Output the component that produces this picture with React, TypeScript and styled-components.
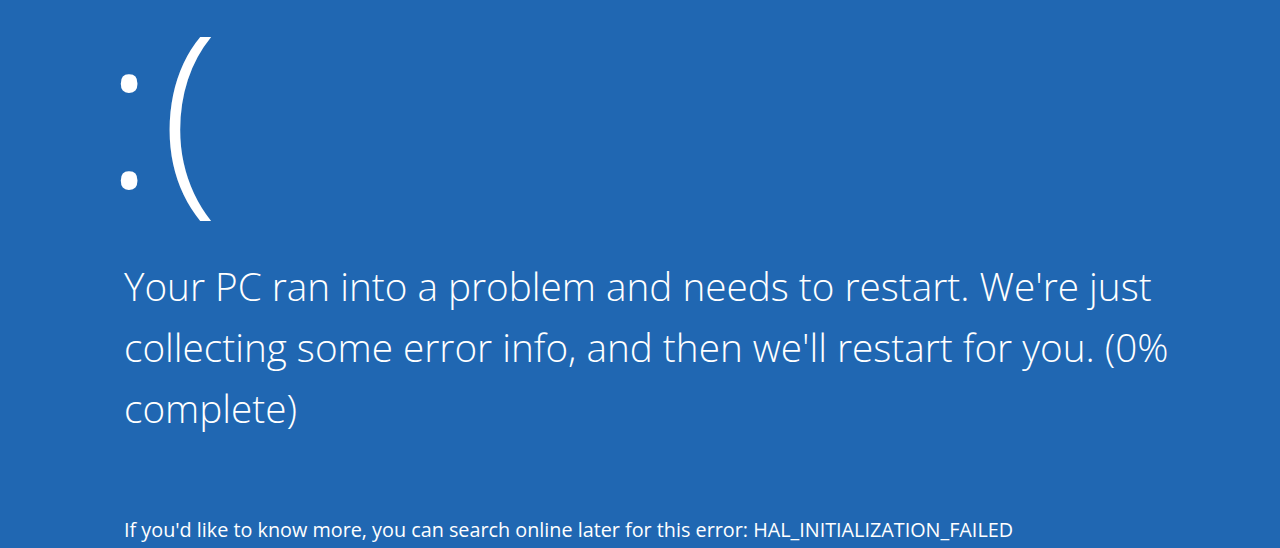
import styled, { createGlobalStyle } from "styled-components";

const GlobalStyle = createGlobalStyle`
  html, body {
    margin: 0;
    padding: 0;
    background: #2067b2;
    overflow: hidden;
  }
`;

const Screen = styled.div`
  width: 1280px;
  height: 548px;
  background: #2067b2;
  color: #ffffff;
  font-family: "Open Sans", "Liberation Sans", sans-serif;
  font-weight: 300;
  display: flex;
  flex-direction: column;
  padding-left: 124px;
  box-sizing: border-box;
  overflow: hidden;
`;

const Face = styled.div`
  font-size: 210px;
  font-weight: 350;
  line-height: 252px;
  height: 252px;
  margin: -19px 0 0 -20px;
  letter-spacing: 7px;
  white-space: nowrap;
`;

const Message = styled.p`
  margin: 23px 0 0;
  width: 1100px;
  font-size: 38.7px;
  line-height: 61px;
`;

const Details = styled.p`
  margin: 79px 0 0;
  font-size: 19.8px;
  line-height: 24px;
  font-weight: 400;
  white-space: nowrap;
`;

export default function App() {
  return (
    <>
      <GlobalStyle />
      <Screen>
        <Face>:(</Face>
        <Message>
          Your PC ran into a problem and needs to restart. We're just collecting
          some error info, and then we'll restart for you. (0% complete)
        </Message>
        <Details>
          If you'd like to know more, you can search online later for this
          error: HAL_INITIALIZATION_FAILED
        </Details>
      </Screen>
    </>
  );
}
